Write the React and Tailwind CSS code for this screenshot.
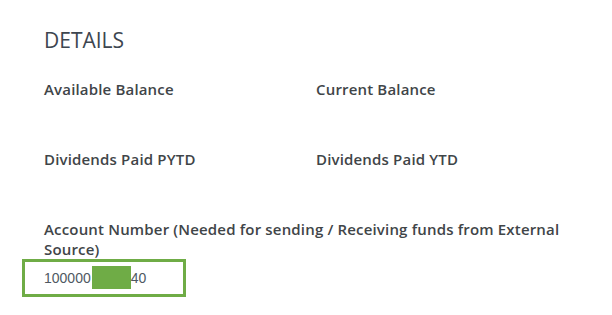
const FIELDS = [
  { label: 'Available Balance', value: '' },
  { label: 'Current Balance', value: '' },
  { label: 'Dividends Paid PYTD', value: '' },
  { label: 'Dividends Paid YTD', value: '' },
]

export default function App() {
  return (
    <div className="min-h-[315px] w-[612px] bg-white pl-[44px] pr-[24px] pt-[25px] font-['Open_Sans',sans-serif] text-[#3f4548]">
      <h2 className="text-[21px] leading-[30px] font-medium text-[#3d4650]">DETAILS</h2>

      <div className="mt-[24px] grid grid-cols-2 gap-y-[50px]">
        {FIELDS.map((f) => (
          <div key={f.label}>
            <p className="text-[15px] leading-[20px] font-semibold tracking-[0.17px]">{f.label}</p>
            {f.value && <p className="text-[15px] leading-[20px]">{f.value}</p>}
          </div>
        ))}
      </div>

      <div className="mt-[50px]">
        <p className="text-[15px] leading-[20px] font-semibold tracking-[0.17px]">
          Account Number (Needed for sending / Receiving funds from External Source)
        </p>
        <div className="-ml-[22px] w-[164px] border-[3px] border-[#6fac46] pb-[5px] pl-[19px] pt-[4px]">
          <p className="flex items-center font-['Liberation_Sans',Arial,sans-serif] text-[14px] leading-[20px] text-[#4f5962]">
            <span>100000</span>
            <span className="ml-[1px] inline-block h-[23px] w-[39px] bg-[#6fac46]" />
            <span>40</span>
          </p>
        </div>
      </div>
    </div>
  )
}
